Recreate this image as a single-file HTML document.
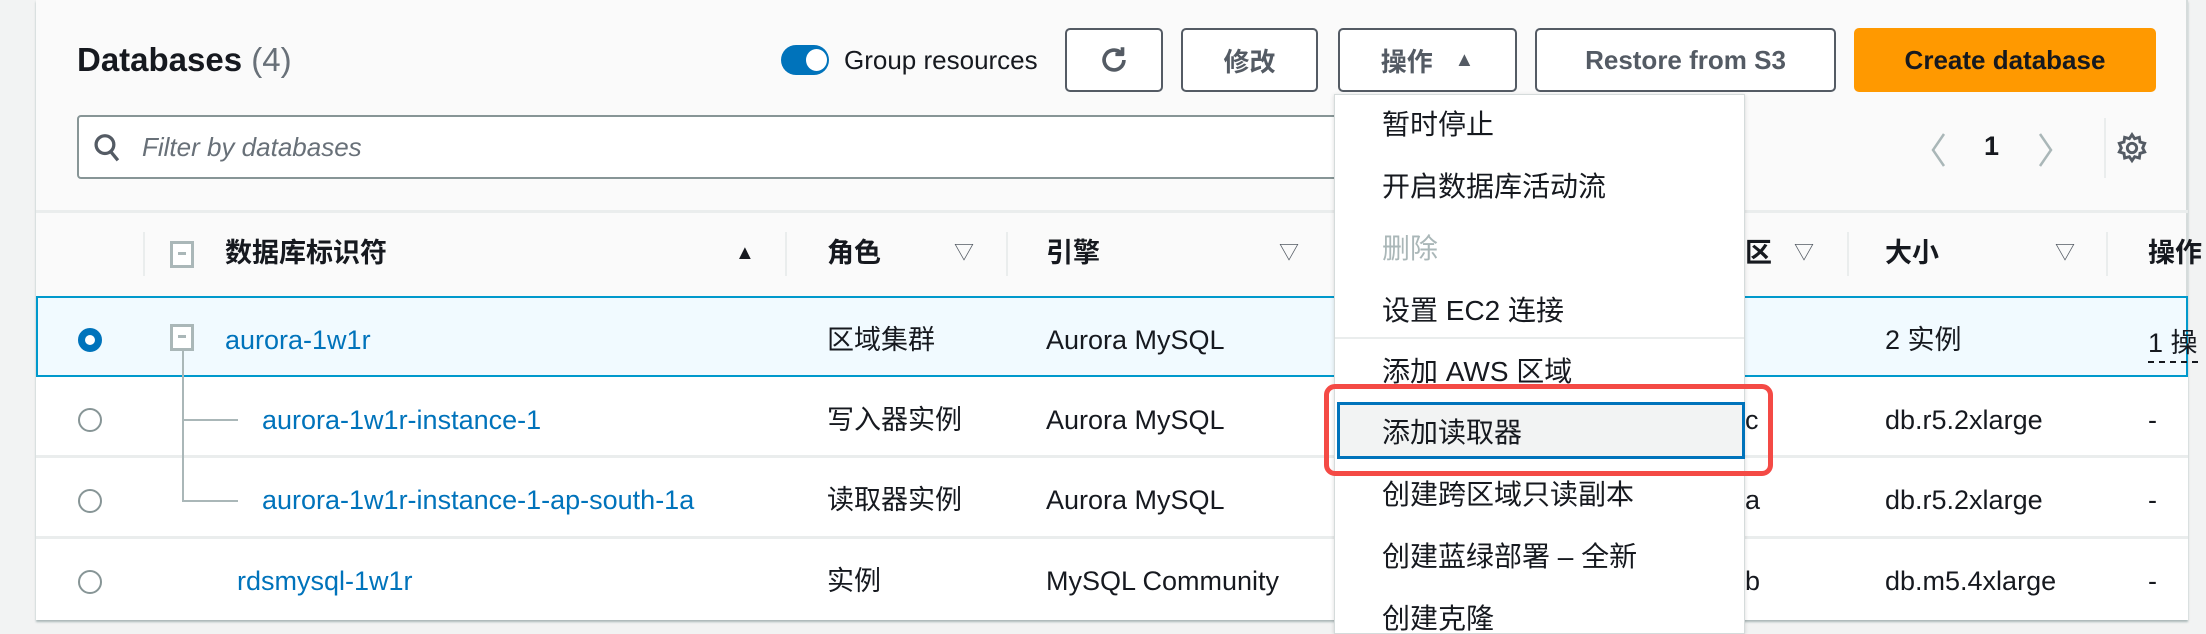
<!DOCTYPE html>
<html><head><meta charset="utf-8"><style>
*{box-sizing:border-box;margin:0;padding:0}
body{width:2206px;height:632px;background:#f2f3f3;position:relative;overflow:hidden;font-family:"Liberation Sans","Noto Sans CJK SC",sans-serif;color:#16191f;font-size:27px}
.a{position:absolute;white-space:nowrap;line-height:30px}
.panel{position:absolute;left:36px;top:0;width:2152px;height:620px;background:#fafafa;border-right:2px solid #d5dbdb;box-shadow:0 2px 2px #aab7b8}
.btn{position:absolute;top:28px;height:64px;border:2px solid #545b64;border-radius:5px;background:#fff;color:#545b64;font-weight:bold;display:flex;align-items:center;justify-content:center;font-size:26px}
.blue{color:#0073bb}
.tri{color:#545b64;font-size:20px}
.mi{position:absolute;left:1382px;font-size:28px;line-height:30px;white-space:nowrap}
.hd{position:absolute;width:2px;background:#eaeded;top:232px;height:44px}
.radio{position:absolute;left:78px;width:24px;height:24px;border-radius:50%;border:2px solid #879596;background:#fff}
.h{font-weight:bold;font-size:27px;color:#16191f}
</style></head><body>
<div class="panel"></div>
<div class="a" style="left:36px;top:296px;width:2152px;height:324px;background:#fff;line-height:normal"></div>
<div class="a" style="left:77px;top:42px;font-size:33px;line-height:36px;font-weight:bold">Databases <span style="color:#687078;font-weight:normal">(4)</span></div>
<div class="a" style="left:781px;top:45px;width:48px;height:30px;border-radius:15px;background:#0073bb"></div>
<div class="a" style="left:806px;top:49px;width:21px;height:22px;border-radius:50%;background:#fff"></div>
<div class="a" style="left:844px;top:45px;font-size:26px">Group resources</div>
<div class="btn" style="left:1065px;width:98px"><svg width="34" height="34" viewBox="0 0 24 24" fill="none" stroke="#545b64" stroke-width="2.6"><path d="M19 12a7 7 0 1 1-2.2-5.1"/><path d="M18 3v5h-5" stroke-linejoin="round"/></svg></div>
<div class="btn" style="left:1181px;width:137px">修改</div>
<div class="btn" style="left:1338px;width:179px">操作&nbsp;&nbsp;&nbsp;<span style="font-size:20px">▲</span></div>
<div class="btn" style="left:1535px;width:301px">Restore from S3</div>
<div class="btn" style="left:1854px;width:302px;background:#ff9900;border-color:#ff9900;color:#16191f">Create database</div>
<div class="a" style="left:77px;top:115px;width:1300px;height:64px;background:#fff;border:2px solid #879596;border-radius:4px"></div>
<svg class="a" style="left:93px;top:133px" width="28" height="30" viewBox="0 0 20 22" fill="none" stroke="#545b64" stroke-width="2.4"><circle cx="8.5" cy="8.5" r="6.5"/><path d="M13 14l5 6"/></svg>
<div class="a" style="left:142px;top:132px;font-style:italic;color:#687078;font-size:26px">Filter by databases</div>
<svg class="a" style="left:1928px;top:132px" width="20" height="36" viewBox="0 0 20 36" fill="none" stroke="#aab7b8" stroke-width="2.5"><path d="M16 2L5 18l11 16"/></svg>
<div class="a" style="left:1984px;top:131px;font-weight:bold;font-size:27px">1</div>
<svg class="a" style="left:2036px;top:132px" width="20" height="36" viewBox="0 0 20 36" fill="none" stroke="#aab7b8" stroke-width="2.5"><path d="M4 2l11 16L4 34"/></svg>
<div class="a" style="left:2104px;top:118px;width:2px;height:60px;background:#eaeded"></div>
<svg class="a" style="left:2116px;top:132px" width="32" height="32" viewBox="0 0 24 24" fill="none" stroke="#545b64" stroke-width="2.2"><circle cx="12" cy="12" r="3.5"/><path d="M12 2l2 3 3.5-1 .5 3.5 3.5 1-1.5 3.5 1.5 3-3.5 1-.5 3.5-3.5-1-2 3-2-3-3.5 1-.5-3.5-3.5-1 1.5-3-1.5-3.5 3.5-1 .5-3.5 3.5 1z"/></svg>
<div class="a" style="left:36px;top:210px;width:2152px;height:3px;background:#eaeded"></div>
<div class="hd" style="left:143px"></div><div class="hd" style="left:785px"></div><div class="hd" style="left:1006px"></div><div class="hd" style="left:1847px"></div><div class="hd" style="left:2106px"></div>
<div class="a" style="left:170px;top:241px;width:24px;height:27px;border:3px solid #aab7b8;background:#fff"></div>
<div class="a" style="left:178px;top:252px;width:8px;height:3px;background:#aab7b8"></div>
<div class="a h" style="left:225px;top:238px">数据库标识符</div>
<div class="a" style="left:735px;top:238px;font-size:20px">▲</div>
<div class="a h" style="left:827px;top:238px">角色</div>
<div class="a tri" style="left:954px;top:238px">▽</div>
<div class="a h" style="left:1046px;top:238px">引擎</div>
<div class="a tri" style="left:1279px;top:238px">▽</div>
<div class="a h" style="left:1745px;top:238px">区</div>
<div class="a tri" style="left:1794px;top:238px">▽</div>
<div class="a h" style="left:1885px;top:238px">大小</div>
<div class="a tri" style="left:2055px;top:238px">▽</div>
<div class="a h" style="left:2148px;top:238px">操作</div>
<div class="a" style="left:36px;top:296px;width:2152px;height:81px;background:#f1faff;border:2px solid #0099cc"></div>
<div class="a" style="left:36px;top:455px;width:2152px;height:3px;background:#eaeded"></div>
<div class="a" style="left:36px;top:536px;width:2152px;height:3px;background:#eaeded"></div>
<div class="radio" style="top:328px;border:7px solid #0073bb"></div>
<div class="radio" style="top:408px"></div><div class="radio" style="top:489px"></div><div class="radio" style="top:570px"></div>
<div class="a" style="left:182px;top:350px;width:2px;height:152px;background:#aab7b8"></div>
<div class="a" style="left:182px;top:419px;width:56px;height:2px;background:#aab7b8"></div>
<div class="a" style="left:182px;top:500px;width:56px;height:2px;background:#aab7b8"></div>
<div class="a" style="left:170px;top:324px;width:24px;height:27px;border:3px solid #aab7b8;background:#fff"></div>
<div class="a" style="left:178px;top:335px;width:8px;height:3px;background:#aab7b8"></div>
<div class="a blue" style="left:225px;top:325px">aurora-1w1r</div>
<div class="a blue" style="left:262px;top:405px">aurora-1w1r-instance-1</div>
<div class="a blue" style="left:262px;top:485px">aurora-1w1r-instance-1-ap-south-1a</div>
<div class="a blue" style="left:237px;top:566px">rdsmysql-1w1r</div>
<div class="a" style="left:827px;top:325px">区域集群</div>
<div class="a" style="left:827px;top:405px">写入器实例</div>
<div class="a" style="left:827px;top:485px">读取器实例</div>
<div class="a" style="left:827px;top:566px">实例</div>
<div class="a" style="left:1046px;top:325px">Aurora MySQL</div>
<div class="a" style="left:1046px;top:405px">Aurora MySQL</div>
<div class="a" style="left:1046px;top:485px">Aurora MySQL</div>
<div class="a" style="left:1046px;top:566px">MySQL Community</div>
<div class="a" style="left:1745px;top:405px">c</div>
<div class="a" style="left:1745px;top:485px">a</div>
<div class="a" style="left:1745px;top:566px">b</div>
<div class="a" style="left:1885px;top:325px">2 实例</div>
<div class="a" style="left:1885px;top:405px">db.r5.2xlarge</div>
<div class="a" style="left:1885px;top:485px">db.r5.2xlarge</div>
<div class="a" style="left:1885px;top:566px">db.m5.4xlarge</div>
<div class="a" style="left:2148px;top:325px;line-height:36px;border-bottom:2px dashed #16191f">1 操</div>
<div class="a" style="left:2148px;top:405px">-</div>
<div class="a" style="left:2148px;top:485px">-</div>
<div class="a" style="left:2148px;top:566px">-</div>
<div class="a" style="left:1334px;top:94px;width:411px;height:540px;background:#fff;border:1px solid #d5dbdb;box-shadow:0 1px 4px rgba(0,0,0,.15)"></div>
<div class="a" style="left:1335px;top:337px;width:409px;height:2px;background:#eaeded"></div>
<div class="a" style="left:1337px;top:402px;width:408px;height:57px;background:#f2f3f3;border:3px solid #0073bb"></div>
<div class="a" style="left:1324px;top:384px;width:449px;height:92px;border:5px solid #f44a45;border-radius:11px"></div>
<div class="mi" style="top:110px">暂时停止</div>
<div class="mi" style="top:172px">开启数据库活动流</div>
<div class="mi" style="top:234px;color:#aab7b8">删除</div>
<div class="mi" style="top:296px">设置 EC2 连接</div>
<div class="mi" style="top:357px">添加 AWS 区域</div>
<div class="mi" style="top:418px">添加读取器</div>
<div class="mi" style="top:480px">创建跨区域只读副本</div>
<div class="mi" style="top:542px">创建蓝绿部署 – 全新</div>
<div class="mi" style="top:604px">创建克隆</div>
</body></html>
